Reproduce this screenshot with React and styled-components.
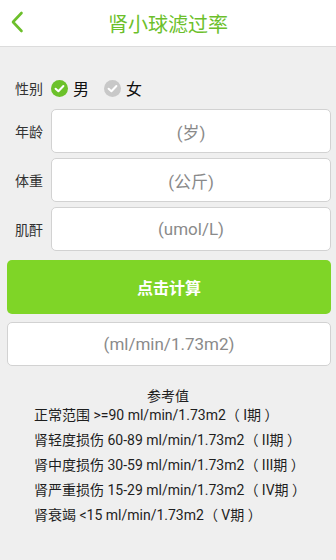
import React, { useState } from "react";
import styled, { createGlobalStyle } from "styled-components";

const GlobalStyle = createGlobalStyle`
  html, body {
    margin: 0;
    padding: 0;
    background: #efefef;
    font-family: Roboto, "Noto Sans CJK SC", sans-serif;
  }
`;

const Page = styled.div`
  width: 336px;
  min-height: 560px;
  background: #efefef;
`;

const Header = styled.header`
  height: 46px;
  background: #fff;
  border-bottom: 1px solid #dcdcdc;
  display: flex;
  align-items: center;
  justify-content: center;
  position: relative;
`;

const BackBtn = styled.span`
  position: absolute;
  left: 10px;
  top: 11px;
  width: 16px;
  height: 22px;
  cursor: pointer;
`;

const Title = styled.h1`
  margin: 0;
  font-size: 20px;
  font-weight: normal;
  color: #6cbf2b;
`;

const Form = styled.section`
  padding: 26px 5px 0 7px;
  display: flex;
  flex-direction: column;
`;

const GenderRow = styled.div`
  height: 30px;
  display: flex;
  align-items: center;
  padding-left: 8px;
  margin-bottom: 6px;
`;

const Label = styled.span`
  font-size: 14px;
  color: #333;
  width: 36px;
  flex-shrink: 0;
`;

const Option = styled.label`
  display: flex;
  align-items: center;
  font-size: 16px;
  color: #111;
  margin-right: 15px;
  cursor: pointer;
  svg {
    margin-right: 5px;
  }
`;

const FieldRow = styled.div`
  display: flex;
  align-items: center;
  padding-left: 8px;
  margin-bottom: ${(p) => p.gap ?? 5}px;
`;

const Box = styled.div`
  flex: 1 0 auto;
  height: 44px;
  box-sizing: border-box;
  background: #fff;
  border: 1px solid #d2d2d2;
  border-radius: 5px;
  display: flex;
  align-items: center;
  justify-content: center;
  font-size: 17px;
  color: #8a8a8a;
`;

const ResultBox = styled(Box)`
  flex: 0 0 44px;
`;

const CalcButton = styled.button`
  height: 54px;
  border: none;
  border-radius: 5px;
  background: #7fd527;
  color: #fff;
  font-family: Roboto, "Noto Sans CJK SC", sans-serif;
  font-size: 16px;
  font-weight: bold;
  margin-bottom: 8px;
  cursor: pointer;
`;

const Reference = styled.div`
  padding: 23px 0 0 34px;
  color: #1e1e1e;
  font-size: 14px;
`;

const RefTitle = styled.div`
  text-align: center;
  padding-right: 34px;
  line-height: 14px;
`;

const RefLine = styled.div`
  line-height: 25px;
  white-space: nowrap;
`;

const Check = ({ on }) => (
  <svg width="17" height="17" viewBox="0 0 17 17">
    <circle cx="8.5" cy="8.5" r="8.5" fill={on ? "#6cc12a" : "#c8c8c8"} />
    <path
      d="M4.6 8.7 L7.4 11.3 L12.4 6"
      fill="none"
      stroke="#fff"
      strokeWidth="2"
      strokeLinecap="round"
      strokeLinejoin="round"
    />
  </svg>
);

const refs = [
  "正常范围 >=90 ml/min/1.73m2（ I期 ）",
  "肾轻度损伤 60-89 ml/min/1.73m2（ II期 ）",
  "肾中度损伤 30-59 ml/min/1.73m2（ III期 ）",
  "肾严重损伤 15-29 ml/min/1.73m2（ IV期 ）",
  "肾衰竭 <15 ml/min/1.73m2（ V期 ）",
];

const fields = [
  { label: "年龄", unit: "(岁)" },
  { label: "体重", unit: "(公斤)" },
  { label: "肌酐", unit: "(umol/L)", gap: 9 },
];

export default function App() {
  const [male, setMale] = useState(true);
  return (
    <Page>
      <GlobalStyle />
      <Header>
        <BackBtn>
          <svg width="16" height="22" viewBox="0 0 16 22">
            <path
              d="M11.5 2 L3 11 L11.5 20"
              fill="none"
              stroke="#6cbf2b"
              strokeWidth="2.6"
              strokeLinecap="round"
              strokeLinejoin="round"
            />
          </svg>
        </BackBtn>
        <Title>肾小球滤过率</Title>
      </Header>
      <Form>
        <GenderRow>
          <Label>性别</Label>
          <Option onClick={() => setMale(true)}>
            <Check on={male} />男
          </Option>
          <Option onClick={() => setMale(false)}>
            <Check on={!male} />女
          </Option>
        </GenderRow>
        {fields.map((f) => (
          <FieldRow key={f.label} gap={f.gap}>
            <Label>{f.label}</Label>
            <Box>{f.unit}</Box>
          </FieldRow>
        ))}
        <CalcButton>点击计算</CalcButton>
        <ResultBox>(ml/min/1.73m2)</ResultBox>
      </Form>
      <Reference>
        <RefTitle>参考值</RefTitle>
        {refs.map((r) => (
          <RefLine key={r}>{r}</RefLine>
        ))}
      </Reference>
    </Page>
  );
}
